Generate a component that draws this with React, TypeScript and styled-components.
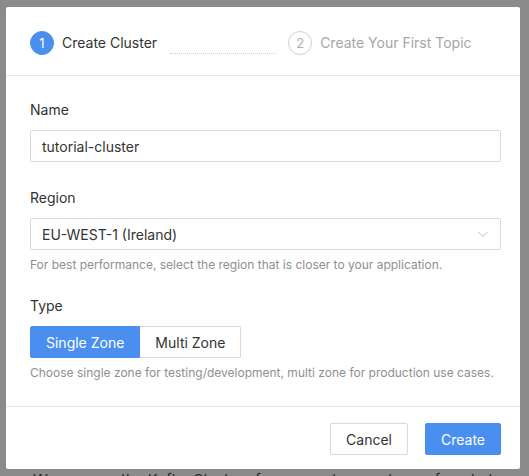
import React from 'react';
import styled, { createGlobalStyle } from 'styled-components';

const Colors = {
    backdrop: '#8b8b8b',
    blue: '#4a8ff0',
    text: '#333333',
    muted: '#8f8f8f',
    faint: '#b0b0b0',
    border: '#dadada',
    divider: '#e8e8e8',
};

const GlobalStyle = createGlobalStyle`
    html, body {
        margin: 0;
        padding: 0;
        background: ${Colors.backdrop};
        font-family: Inter, "Noto Sans", sans-serif;
        -webkit-font-smoothing: antialiased;
    }
    * {
        box-sizing: border-box;
    }
`;

const Backdrop = styled.div`
    width: 529px;
    height: 476px;
    overflow: hidden;
    padding-top: 7px;
    padding-left: 6px;
    background: ${Colors.backdrop};
`;

const Modal = styled.div`
    width: 514px;
    background: #fff;
    border-radius: 2px;
    display: flex;
    flex-direction: column;
`;

const Header = styled.div`
    height: 69px;
    padding: 24px 19px 0 24px;
    border-bottom: 1px solid ${Colors.divider};
    display: flex;
    align-items: flex-start;
`;

const Step = styled.div`
    display: flex;
    align-items: center;
    gap: 8px;
`;

const StepDot = styled.div<{ active?: boolean }>`
    width: 24px;
    height: 24px;
    border-radius: 50%;
    display: flex;
    align-items: center;
    justify-content: center;
    font-size: 13px;
    background: ${({ active }) => (active ? Colors.blue : '#fff')};
    color: ${({ active }) => (active ? '#fff' : Colors.faint)};
    border: 1px solid ${({ active }) => (active ? Colors.blue : '#d0d0d0')};
`;

const StepTitle = styled.div<{ active?: boolean }>`
    font-size: 14px;
    line-height: 24px;
    color: ${({ active }) => (active ? Colors.text : '#a6a6a6')};
`;

const StepLine = styled.div`
    width: 106px;
    margin: 0 12px 0 13px;
    align-self: center;
    border-top: 1px dotted #cfcfcf;
`;

const Body = styled.div`
    padding: 23px 19px 23px 24px;
    border-bottom: 1px solid ${Colors.divider};
    display: flex;
    flex-direction: column;
`;

const Field = styled.div<{ gap?: number }>`
    display: flex;
    flex-direction: column;
    margin-top: ${({ gap }) => gap ?? 0}px;
`;

const Label = styled.div`
    font-size: 14px;
    line-height: 22px;
    color: ${Colors.text};
    margin-bottom: 9px;
`;

const Input = styled.div`
    height: 32px;
    border: 1px solid ${Colors.border};
    border-radius: 2px;
    padding: 0 11px;
    display: flex;
    align-items: center;
    justify-content: space-between;
    font-size: 14px;
    color: ${Colors.text};
`;

const Help = styled.div`
    font-size: 12px;
    line-height: 20px;
    color: ${Colors.muted};
    margin-top: 5px;
`;

const Segmented = styled.div`
    display: flex;
`;

const Segment = styled.div<{ selected?: boolean }>`
    height: 32px;
    padding: 0 15px;
    display: flex;
    align-items: center;
    font-size: 14px;
    background: ${({ selected }) => (selected ? Colors.blue : '#fff')};
    color: ${({ selected }) => (selected ? '#fff' : Colors.text)};
    border: 1px solid ${({ selected }) => (selected ? Colors.blue : Colors.border)};
    &:first-child {
        border-radius: 2px 0 0 2px;
    }
    &:last-child {
        border-left: none;
        border-radius: 0 2px 2px 0;
    }
`;

const Footer = styled.div`
    padding: 16px 19px 14px 24px;
    display: flex;
    justify-content: flex-end;
    gap: 17px;
`;

const Button = styled.div<{ primary?: boolean }>`
    height: 32px;
    padding: 0 15px;
    display: flex;
    align-items: center;
    font-size: 14px;
    border-radius: 2px;
    background: ${({ primary }) => (primary ? Colors.blue : '#fff')};
    color: ${({ primary }) => (primary ? '#fff' : Colors.text)};
    border: 1px solid ${({ primary }) => (primary ? Colors.blue : Colors.border)};
`;

const BehindText = styled.div`
    margin-top: 1px;
    padding-left: 27px;
    font-size: 15px;
    line-height: 20px;
    color: #2b2b2b;
    white-space: nowrap;
`;

const Chevron = () => (
    <svg width='12' height='12' viewBox='0 0 12 12' fill='none'>
        <path d='M1.5 4l4.5 4.5L10.5 4' stroke='#bfbfbf' strokeWidth='1' />
    </svg>
);

export default function App() {
    return (
        <>
            <GlobalStyle />
            <Backdrop>
                <Modal>
                    <Header>
                        <Step>
                            <StepDot active>1</StepDot>
                            <StepTitle active>Create Cluster</StepTitle>
                        </Step>
                        <StepLine />
                        <Step>
                            <StepDot>2</StepDot>
                            <StepTitle>Create Your First Topic</StepTitle>
                        </Step>
                    </Header>
                    <Body>
                        <Field>
                            <Label>Name</Label>
                            <Input>tutorial-cluster</Input>
                        </Field>
                        <Field gap={25}>
                            <Label>Region</Label>
                            <Input>
                                EU-WEST-1 (Ireland)
                                <Chevron />
                            </Input>
                            <Help>For best performance, select the region that is closer to your application.</Help>
                        </Field>
                        <Field gap={20}>
                            <Label>Type</Label>
                            <Segmented>
                                <Segment selected>Single Zone</Segment>
                                <Segment>Multi Zone</Segment>
                            </Segmented>
                            <Help>Choose single zone for testing/development, multi zone for production use cases.</Help>
                        </Field>
                    </Body>
                    <Footer>
                        <Button>Cancel</Button>
                        <Button primary>Create</Button>
                    </Footer>
                </Modal>
                <BehindText>We manage the Kafka Clusters for you and you only pay for what you use</BehindText>
            </Backdrop>
        </>
    );
}
